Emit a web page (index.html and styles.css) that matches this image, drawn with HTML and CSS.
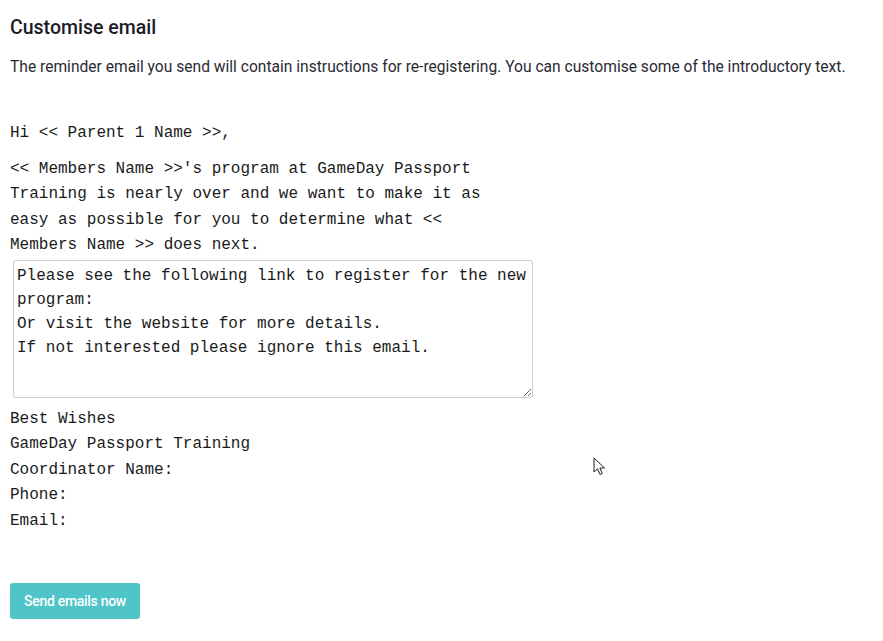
FILE: index.html
```html
<!DOCTYPE html>
<html>
<head>
<meta charset="utf-8">
<link rel="stylesheet" href="styles.css">
</head>
<body>
<div class="page">
  <h2 class="title">Customise email</h2>
  <p class="intro">The reminder email you send will contain instructions for re-registering. You can customise some of the introductory text.</p>
  <div class="email">
    <p class="greeting">Hi &lt;&lt; Parent 1 Name &gt;&gt;,</p>
    <p class="para">&lt;&lt; Members Name &gt;&gt;'s program at GameDay Passport<br>Training is nearly over and we want to make it as<br>easy as possible for you to determine what &lt;&lt;<br>Members Name &gt;&gt; does next.</p>
    <textarea class="custom" rows="5">Please see the following link to register for the new program:
Or visit the website for more details.
If not interested please ignore this email.</textarea>
    <p class="sign">Best Wishes<br>GameDay Passport Training<br>Coordinator Name:<br>Phone:<br>Email:</p>
  </div>
  <button class="send">Send emails now</button>
</div>
<svg class="cursor" width="14" height="20" viewBox="0 0 14 20"><path d="M1 1 L1 15 L4.5 11.8 L7 17.5 L9.3 16.5 L6.9 11 L11.5 11 Z" fill="#fff" stroke="#222" stroke-width="1" stroke-linejoin="miter"/></svg>
</body>
</html>
```
FILE: styles.css
```css
html, body { margin: 0; padding: 0; background: #fff; }
.page { padding: 15px 10px 20px 10px; }
.title {
  font-family: Roboto, "Liberation Sans", sans-serif;
  font-size: 19.5px; font-weight: 500; color: #1c1c28;
  margin: 0 0 14px 0; line-height: 26px;
}
.intro {
  font-family: Roboto, "Liberation Sans", sans-serif;
  font-size: 15.6px; color: #2a2a33; margin: 0; line-height: 24px;
}
.email {
  font-family: "Liberation Mono", "Courier New", monospace;
  font-size: 16px; color: #1a1a1a;
  padding-top: 42px;
}
.email p { margin: 0; line-height: 25.5px; }
.greeting { margin-bottom: 10px !important; }
.custom {
  display: block;
  box-sizing: border-box;
  width: 520px; height: 138px;
  margin: 1px 0 9px 3px;
  padding: 3px 3px 1px 3px;
  font-family: "Liberation Mono", "Courier New", monospace;
  font-size: 16px; line-height: 24px; color: #1a1a1a;
  border: 1px solid #c3d0dc; border-radius: 3px;
  resize: vertical;
}
.send {
  margin-top: 49px;
  width: 130px; height: 36px;
  background: #4fc4c9; color: #fff; border: none; border-radius: 3px;
  font-family: Roboto, "Liberation Sans", sans-serif;
  font-size: 14px; font-weight: 500; letter-spacing: -0.3px;
}
.cursor { position: absolute; left: 593px; top: 457px; }
```
